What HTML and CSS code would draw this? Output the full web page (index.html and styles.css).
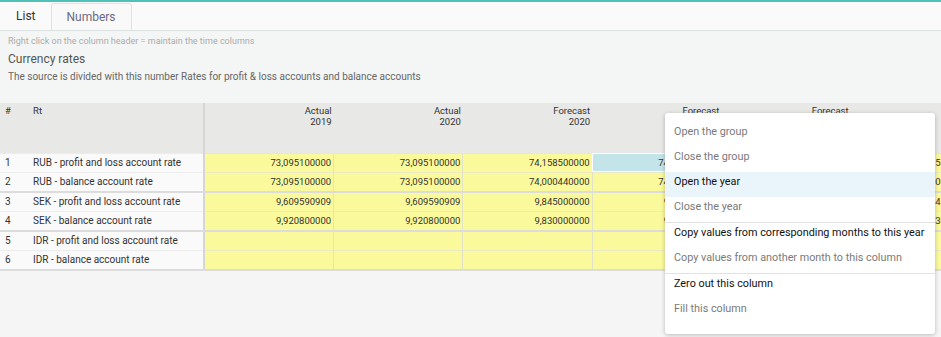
FILE: index.html
```html
<!DOCTYPE html>
<html lang="en">
<head>
    <meta charset="UTF-8">
    <meta name="viewport" content="width=device-width, initial-scale=1.0">
    <title>Currency rates</title>
    <link rel="stylesheet" href="styles.css">
</head>
<body>
    <div class="tabs">
        <div class="tab">List</div>
        <div class="tab active">Numbers</div>
    </div>

    <div class="info">
        <p class="hint">Right click on the column header = maintain the time columns</p>
        <h2 class="title">Currency rates</h2>
        <p class="desc">The source is divided with this number Rates for profit &amp; loss accounts and balance accounts</p>
    </div>

    <div class="grid-wrap">
        <table class="grid">
            <colgroup>
                <col class="c-num">
                <col class="c-name">
                <col class="c-val"><col class="c-val"><col class="c-val">
                <col class="c-val"><col class="c-val"><col class="c-val">
            </colgroup>
            <thead>
                <tr>
                    <th class="num">#</th>
                    <th class="name">Rt</th>
                    <th>Actual<br>2019</th>
                    <th>Actual<br>2020</th>
                    <th>Forecast<br>2020</th>
                    <th>Forecast<br>2021</th>
                    <th>Forecast<br>2022</th>
                    <th>Forecast<br>2023</th>
                </tr>
            </thead>
            <tbody>
                <tr>
                    <td class="num">1</td>
                    <td class="name">RUB - profit and loss account rate</td>
                    <td>73,095100000</td><td>73,095100000</td><td>74,158500000</td>
                    <td class="selected">74,158500000</td><td>74,158500000</td><td>74,158500000</td>
                </tr>
                <tr class="group-end">
                    <td class="num">2</td>
                    <td class="name">RUB - balance account rate</td>
                    <td>73,095100000</td><td>73,095100000</td><td>74,000440000</td>
                    <td>74,000440000</td><td>74,000440000</td><td>74,000440000</td>
                </tr>
                <tr>
                    <td class="num">3</td>
                    <td class="name">SEK - profit and loss account rate</td>
                    <td>9,609590909</td><td>9,609590909</td><td>9,845000000</td>
                    <td>9,845000000</td><td>9,845000000</td><td>9,845000000</td>
                </tr>
                <tr class="group-end">
                    <td class="num">4</td>
                    <td class="name">SEK - balance account rate</td>
                    <td>9,920800000</td><td>9,920800000</td><td>9,830000000</td>
                    <td>9,830000000</td><td>9,830000000</td><td>9,830000000</td>
                </tr>
                <tr>
                    <td class="num">5</td>
                    <td class="name">IDR - profit and loss account rate</td>
                    <td></td><td></td><td></td><td></td><td></td><td></td>
                </tr>
                <tr class="group-end">
                    <td class="num">6</td>
                    <td class="name">IDR - balance account rate</td>
                    <td></td><td></td><td></td><td></td><td></td><td></td>
                </tr>
            </tbody>
        </table>

        <ul class="menu">
            <li class="disabled">Open the group</li>
            <li class="disabled">Close the group</li>
            <li class="hover">Open the year</li>
            <li class="disabled">Close the year</li>
            <li class="sep"></li>
            <li>Copy values from corresponding months to this year</li>
            <li class="disabled">Copy values from another month to this column</li>
            <li class="sep"></li>
            <li>Zero out this column</li>
            <li class="disabled">Fill this column</li>
        </ul>
    </div>
</body>
</html>
```

FILE: styles.css
```css
body {
    margin: 0;
    font-family: Roboto, "Open Sans", sans-serif;
    background-color: #f5f5f5;
    border-top: 2px solid #4fc1b6;
    overflow: hidden;
    height: 335px;
}
.tabs {
    display: flex;
    height: 28px;
    padding-left: 1px;
    background: #fafafa;
    border-bottom: 1px solid #dde3e3;
}
.tab {
    padding: 0 15px;
    line-height: 28px;
    font-size: 12px;
    color: #333;
}
.tab.active {
    margin-top: 1px;
    line-height: 26px;
    color: #6c6985;
    background: #f9f9f9;
    border: 1px solid #e2e2e2;
    border-bottom: none;
    border-radius: 3px 3px 0 0;
}
.info {
    background: #f4f6f5;
    padding: 4px 8px 19px;
}
.hint {
    margin: 0;
    font-size: 9px;
    line-height: 12px;
    color: #ababab;
}
.title {
    margin: 5px 0 0;
    font-size: 12px;
    font-weight: normal;
    line-height: 14px;
    color: #555;
}
.desc {
    margin: 4px 0 0;
    font-size: 10px;
    line-height: 14px;
    color: #666;
}
.grid-wrap {
    position: relative;
}
.grid {
    border-collapse: collapse;
    table-layout: fixed;
    width: 980px;
    font-size: 9.5px;
    color: #333;
}
.c-num { width: 30px; }
.c-name { width: 174px; }
.c-val { width: 129px; }
.grid th {
    height: 50px;
    padding: 2px 2px 0 0;
    vertical-align: top;
    text-align: right;
    font-weight: normal;
    line-height: 11px;
    background: #e8e8e6;
    box-sizing: border-box;
}
.grid th.num, .grid td.num {
    text-align: left;
    padding-left: 5px;
}
.grid th.name, .grid td.name {
    text-align: left;
    padding-left: 3px;
    border-right: 2px solid #d6d6d6;
}
.grid td {
    height: 18px;
    padding: 0 2px 0 0;
    text-align: right;
    white-space: nowrap;
    overflow: hidden;
    background: #faf99b;
    border-top: 1px solid #e9e9c6;
    border-left: 1px solid #e2e2c8;
}
.grid td.num, .grid td.name {
    background: #fafafa;
    border-top: 1px solid #ececec;
    border-left: none;
    font-size: 10px;
}
.grid tr.group-end td {
    border-bottom: 2px solid #dcdcdc;
}
.grid td.selected {
    background: #c3e4e8;
    outline: 1px solid #fff;
    outline-offset: -1px;
}
.menu {
    position: absolute;
    left: 665px;
    top: 10px;
    width: 270px;
    margin: 0;
    padding: 9px 0 10px;
    list-style: none;
    background: #fff;
    border-radius: 3px;
    box-shadow: 0 1px 4px rgba(0, 0, 0, 0.25);
    font-size: 10.8px;
    color: #111;
}
.menu li {
    padding: 3px 9px 8px;
    line-height: 14px;
    white-space: nowrap;
}
.menu li.disabled {
    color: #7a7a7a;
}
.menu li.hover {
    background: #eaf5fb;
}
.menu li.sep {
    padding: 0;
    height: 1px;
    background: #e2e2e2;
}
```
